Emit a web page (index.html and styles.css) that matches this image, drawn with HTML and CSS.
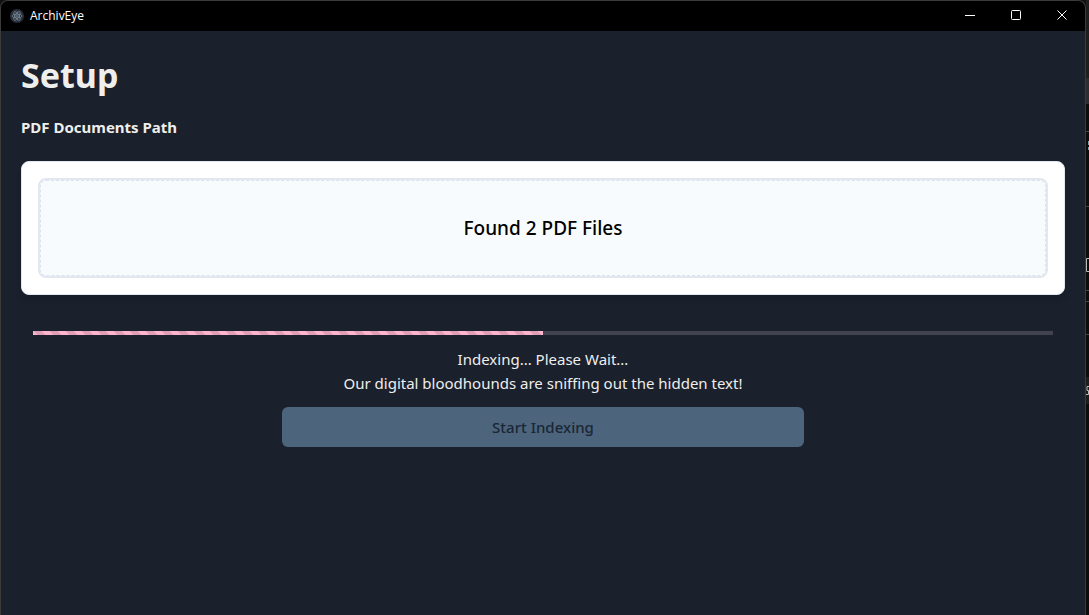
FILE: index.html
```html
<!DOCTYPE html>
<html lang="en">
<head>
<meta charset="utf-8">
<title>ArchivEye</title>
<link rel="stylesheet" href="styles.css">
</head>
<body>
<div class="window">
  <header class="titlebar">
    <svg class="logo" width="14" height="14" viewBox="0 0 28 28" fill="none" stroke="#758b98" stroke-width="1.5" aria-hidden="true">
      <circle cx="14" cy="14" r="14" fill="#2b2e3a" stroke="none"/>
      <ellipse cx="14" cy="14" rx="10" ry="4"/>
      <ellipse cx="14" cy="14" rx="10" ry="4" transform="rotate(60 14 14)"/>
      <ellipse cx="14" cy="14" rx="10" ry="4" transform="rotate(120 14 14)"/>
      <circle cx="14" cy="14" r="1" fill="#758b98"/>
    </svg>
    <span class="app-name">ArchivEye</span>
    <div class="controls">
      <button class="control" type="button" aria-label="Minimize"><svg width="12" height="12" viewBox="0 0 12 12" fill="none" stroke="#fff"><path d="M1 5.5h10"/></svg></button>
      <button class="control" type="button" aria-label="Maximize"><svg width="12" height="12" viewBox="0 0 12 12" fill="none" stroke="#fff"><rect x="1.5" y=".5" width="9" height="9" rx="1"/></svg></button>
      <button class="control" type="button" aria-label="Close"><svg width="12" height="12" viewBox="0 0 12 12" fill="none" stroke="#fff"><path d="M1.5 .5l9 9M10.5 .5l-9 9"/></svg></button>
    </div>
  </header>
  <main class="content">
    <h1 class="title">Setup</h1>
    <h2 class="label">PDF Documents Path</h2>
    <section class="card">
      <div class="dropzone"><p class="found">Found 2 PDF Files</p></div>
    </section>
    <section class="status">
      <div class="track" role="progressbar" aria-label="Indexing" aria-valuenow="50" aria-valuemin="0" aria-valuemax="100"><div class="fill" style="width: 50%"></div></div>
      <p class="message">Indexing... Please Wait...</p>
      <p class="message">Our digital bloodhounds are sniffing out the hidden text!</p>
      <button class="start" type="button" disabled>Start Indexing</button>
    </section>
  </main>
</div>
<svg class="backdrop" width="3" height="615" viewBox="0 0 3 615" aria-hidden="true">
  <path fill="#1e1e1e" d="M0 0h3v78H0z"/>
  <path fill="#2d2d2f" d="M0 78h3v26H0z"/>
  <path fill="#0c0c0c" d="M0 104h3v511H0z"/>
  <path fill="#1d1d1d" d="M0 377h3v27H0z"/>
  <path fill="#444" d="M0 131h3v1H0zM0 206h3v1H0zM0 290h3v1H0zM0 301h3v1H0zM0 334h3v1H0z"/>
  <path fill="none" stroke="#bbb" d="M3 258.500H.5v13H3M3 386.500H1v4h1.500v4H0"/>
  <path fill="#7fa3ad" d="M2 141h1v4H2zM2 147h1v3H2z"/>
</svg>
</body>
</html>
```
FILE: styles.css
```css
* { box-sizing: border-box; }
html { background: #111; }
body {
  margin: 0;
  height: 100vh;
  display: flex;
  overflow: hidden;
  font-family: "Noto Sans", "Open Sans", sans-serif;
  font-size: 15px;
  line-height: 24px;
  color: #eeeeec;
}
h1, h2, p { margin: 0; }
.window {
  flex: 1;
  border: 1px solid #3b3b3b;
  border-bottom: 0;
  border-radius: 8px 8px 0 0;
  background: #1a202c;
  overflow: hidden;
}
.backdrop { flex: none; }
.titlebar {
  display: flex;
  align-items: center;
  height: 30px;
  padding-left: 9px;
  background: #000;
}
.app-name {
  margin-left: 6px;
  font-family: "Open Sans", "Noto Sans", sans-serif;
  font-size: 12px;
  line-height: 16px;
  color: #fff;
}
.controls { display: flex; margin-left: auto; }
.control {
  display: grid;
  place-items: center;
  width: 46px;
  height: 30px;
  padding: 0;
  border: 0;
  background: none;
}
.content { padding: 20px; }
.title {
  font-size: 34px;
  line-height: 48px;
  font-weight: 700;
}
.label {
  margin-top: 16px;
  font-size: 15px;
  line-height: 24px;
  font-weight: 700;
}
.card {
  margin-top: 22px;
  padding: 16px;
  border: 1px solid #e2e8f0;
  border-radius: 8px;
  background: #fff;
  box-shadow: 0 4px 6px rgba(0, 0, 0, .1);
}
.dropzone {
  border: 2px solid #e2e8f0;
  border-radius: 8px;
  background: #f7fafc;
}
.found {
  padding: 32px;
  border: 1px dashed #dbe4ec;
  border-radius: 6px;
  background: #f7fbfe;
  text-align: center;
  font-size: 19px;
  line-height: 30px;
  font-weight: 500;
  color: #000;
}
.status {
  display: flex;
  flex-direction: column;
  align-items: center;
  padding: 36px 12px 0;
}
.track {
  width: 100%;
  height: 4px;
  margin-bottom: 12px;
  background: #41444e;
}
.fill {
  height: 100%;
  background-color: #ffb3cc;
  background-image: linear-gradient(45deg, rgba(27, 32, 44, .14) 25%, transparent 25%, transparent 50%, rgba(27, 32, 44, .14) 50%, rgba(27, 32, 44, .14) 75%, transparent 75%);
  background-size: 16px 16px;
}
.message { text-align: center; }
.start {
  width: 522px;
  max-width: 100%;
  height: 40px;
  margin-top: 12px;
  border: 0;
  border-radius: 6px;
  background: #4c657c;
  color: #1b2636;
  font: inherit;
  font-weight: 500;
}
```
